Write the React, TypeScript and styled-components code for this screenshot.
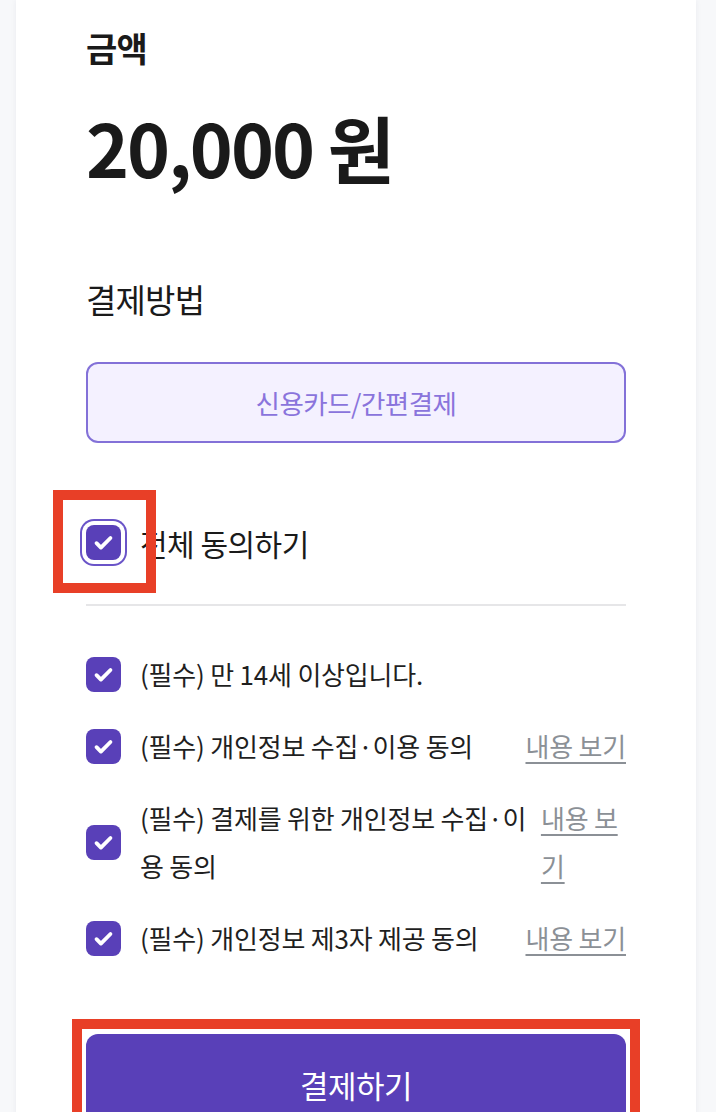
import React from "react";
import styled, { createGlobalStyle } from "styled-components";

const GlobalStyle = createGlobalStyle`
  html, body {
    margin: 0;
    padding: 0;
    background: #f7f8fa;
  }
  body {
    font-family: "Noto Sans CJK KR", "Noto Sans", sans-serif;
    color: #1a1a1a;
  }
  * { box-sizing: border-box; }
`;

const Card = styled.main`
  margin: 0 20px 0 16px;
  min-height: 1200px;
  background: #ffffff;
  box-shadow: 0 0 6px rgba(20, 30, 60, 0.06);
  padding: 26px 70px 0;
  display: flex;
  flex-direction: column;
`;

const Label = styled.h2`
  margin: 0;
  font-size: 34px;
  line-height: 44px;
  font-weight: 700;
  letter-spacing: -0.8px;
`;

const Amount = styled.div`
  margin-top: 36px;
  font-size: 73px;
  line-height: 80px;
  font-weight: 700;
  letter-spacing: -2px;
`;

const SectionTitle = styled.h3`
  margin: 92px 0 0;
  font-size: 33px;
  line-height: 42px;
  font-weight: 400;
  letter-spacing: -0.8px;
`;

const MethodButton = styled.button`
  margin-top: 42px;
  height: 81px;
  width: 100%;
  border: 2px solid #8371d8;
  border-radius: 12px;
  background: #f4f1ff;
  color: #8a74dc;
  font-family: inherit;
  font-size: 26.5px;
  font-weight: 400;
  letter-spacing: -0.5px;
`;

const AllRow = styled.label`
  margin-top: 82px;
  display: flex;
  align-items: center;
  gap: 19px;
  height: 35px;
  font-size: 30px;
  letter-spacing: -0.5px;
`;

const Divider = styled.hr`
  margin: 44px 0 0;
  border: none;
  height: 2px;
  background: #e6e6e8;
`;

const List = styled.ul`
  list-style: none;
  margin: 44px 0 0;
  padding: 0;
  display: flex;
  flex-direction: column;
  gap: 24px;
`;

const Item = styled.li`
  display: flex;
  align-items: center;
  font-size: 26px;
  line-height: 48px;
  letter-spacing: -0.2px;
`;

const ItemText = styled.span`
  flex: 0 1 auto;
  margin-left: 19px;
  color: #1f1f1f;
`;

const DetailLink = styled.a`
  flex: 0 1 auto;
  margin-left: auto;
  padding-left: 9px;
  color: #8b9096;
  text-decoration: underline;
  text-underline-offset: 5px;
  text-decoration-thickness: 2px;
`;

const BoxWrap = styled.span`
  position: relative;
  flex: 0 0 auto;
  display: inline-flex;
`;

const Box = styled.span<{ $focused?: boolean }>`
  width: 35px;
  height: 35px;
  border-radius: 8px;
  background: #5940b8;
  display: inline-flex;
  align-items: center;
  justify-content: center;
  box-shadow: ${(p) =>
    p.$focused ? "0 0 0 4px #ffffff, 0 0 0 6px #6a54c8" : "none"};
`;

const Highlight = styled.span<{ $inset: string }>`
  position: absolute;
  inset: ${(p) => p.$inset};
  border: 10px solid #e83f27;
  pointer-events: none;
`;

const PayWrap = styled.div`
  position: relative;
  margin-top: 72px;
`;

const PayButton = styled.button`
  width: 100%;
  height: 100px;
  border: none;
  border-radius: 12px;
  background: #5940b8;
  color: #ffffff;
  font-family: inherit;
  font-size: 31px;
  letter-spacing: -0.5px;
`;

const Check = () => (
  <svg width="27" height="27" viewBox="0 0 24 24" fill="none">
    <path
      d="M5.8 12.6l3.9 3.9L18.2 8"
      stroke="#ffffff"
      strokeWidth="3.4"
      strokeLinecap="round"
      strokeLinejoin="round"
    />
  </svg>
);

const CheckBox = ({ focused }: { focused?: boolean }) => (
  <BoxWrap>
    <Box $focused={focused}>
      <Check />
    </Box>
    {focused && <Highlight $inset="-35px -35px -33px -33px" />}
  </BoxWrap>
);

const items: { text: string; link?: boolean }[] = [
  { text: "(필수) 만 14세 이상입니다." },
  { text: "(필수) 개인정보 수집·이용 동의", link: true },
  { text: "(필수) 결제를 위한 개인정보 수집·이용 동의", link: true },
  { text: "(필수) 개인정보 제3자 제공 동의", link: true },
];

export default function App() {
  return (
    <>
      <GlobalStyle />
      <Card>
        <Label>금액</Label>
        <Amount>20,000 원</Amount>
        <SectionTitle>결제방법</SectionTitle>
        <MethodButton>신용카드/간편결제</MethodButton>
        <AllRow>
          <CheckBox focused />
          <span>전체 동의하기</span>
        </AllRow>
        <Divider />
        <List>
          {items.map((it) => (
            <Item key={it.text}>
              <CheckBox />
              <ItemText>{it.text}</ItemText>
              {it.link && <DetailLink>내용 보기</DetailLink>}
            </Item>
          ))}
        </List>
        <PayWrap>
          <PayButton>결제하기</PayButton>
          <Highlight $inset="-15px -14px -14px -14px" />
        </PayWrap>
      </Card>
    </>
  );
}
